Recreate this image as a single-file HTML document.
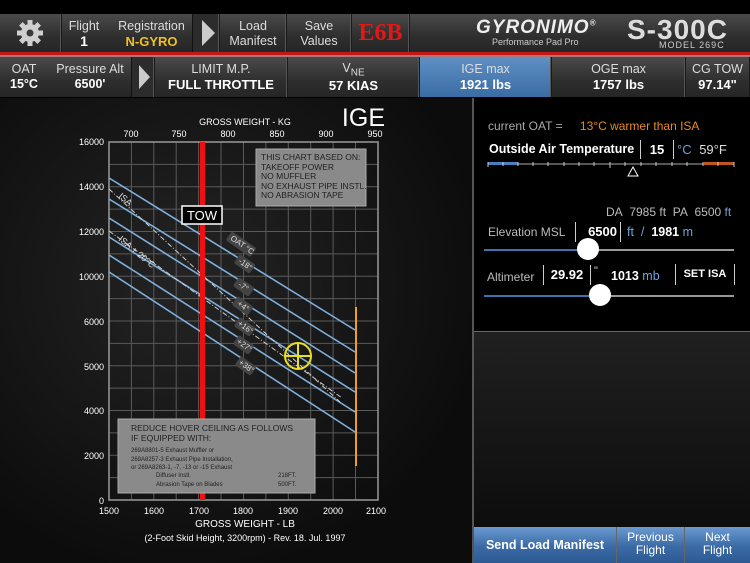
<!DOCTYPE html>
<html><head><meta charset="utf-8"><style>
*{margin:0;padding:0;box-sizing:border-box}
body{width:750px;height:563px;background:#000;overflow:hidden;font-family:"Liberation Sans",sans-serif;position:relative;color:#fff}
.a{position:absolute}
.bar{background:linear-gradient(#4a4a4a,#2e2e2e 60%,#262626)}
.cell{position:absolute;top:0;height:100%;border-right:1px solid #1a1a1a;box-shadow:inset -1px 0 0 #555;text-align:center;color:#ddd;font-size:12.5px;line-height:15px}
.c{text-align:center}
.b{font-weight:bold}
</style></head><body>
<div class="a bar" style="left:0;top:14px;width:750px;height:38px">
 <div class="cell" style="left:0;width:62px"><svg width="62" height="38"><g transform="translate(30,19)" fill="#cfcfcf"><circle r="9"/><g id="t"><rect x="-2.5" y="-13" width="5" height="6"/></g><use href="#t" transform="rotate(45)"/><use href="#t" transform="rotate(90)"/><use href="#t" transform="rotate(135)"/><use href="#t" transform="rotate(180)"/><use href="#t" transform="rotate(225)"/><use href="#t" transform="rotate(270)"/><use href="#t" transform="rotate(315)"/><circle r="3.5" fill="#3a3a3a"/></g></svg></div>
 <div class="cell" style="left:62px;width:130px;box-shadow:none;border:none">
  <div class="a" style="left:4px;top:5px;width:36px">Flight<br><b style="color:#fff;font-size:14px">1</b></div>
  <div class="a" style="left:52px;top:5px;width:75px">Registration<br><b style="color:#f0c020;font-size:13px">N-GYRO</b></div>
 </div>
 <div class="cell" style="left:192px;width:28px;background:#2c2c2c;border-left:1px solid #111"><svg width="28" height="38"><polygon points="9,6 22,19 9,32" fill="#ccc"/></svg></div>
 <div class="cell" style="left:220px;width:67px;padding-top:5px">Load<br>Manifest</div>
 <div class="cell" style="left:287px;width:65px;padding-top:5px">Save<br>Values</div>
 <div class="cell" style="left:352px;width:58px;color:#e01818;font-size:24px;font-weight:bold;line-height:38px;font-family:'Liberation Serif',serif">E6B</div>
 <div class="a" style="left:476px;top:3px;font-size:19px;font-style:italic;font-weight:bold;color:#eee;letter-spacing:1px">GYRONIMO<sup style="font-size:8px">®</sup></div>
 <div class="a" style="left:492px;top:23px;font-size:9px;color:#ccc">Performance Pad Pro</div>
 <div class="a" style="left:627px;top:0px;font-size:28px;color:#ddd;font-weight:bold;letter-spacing:1px">S-300C</div>
 <div class="a" style="left:659px;top:26px;font-size:9px;color:#ccc;letter-spacing:1px">MODEL 269C</div>
</div>
<div class="a" style="left:0;top:52px;width:750px;height:3px;background:#c41818"></div>
<div class="a" style="left:0;top:55px;width:750px;height:2px;background:#a77"></div>
<div class="a bar" style="left:0;top:57px;width:750px;height:40px">
 <div class="a" style="left:0;top:5px;width:130px;color:#ddd;font-size:12.5px;line-height:15px">
  <div class="a c" style="left:8px;width:32px">OAT<br><b style="color:#fff">15°C</b></div>
  <div class="a c" style="left:54px;width:72px">Pressure Alt<br><b style="color:#fff">6500'</b></div>
 </div>
 <div class="cell" style="left:131px;width:24px;background:#2c2c2c;border-left:1px solid #111"><svg width="24" height="40"><polygon points="7,8 18,20 7,32" fill="#ccc"/></svg></div>
 <div class="cell" style="left:155px;width:133px;padding-top:5px">LIMIT M.P.<br><b style="color:#fff;font-size:13px">FULL THROTTLE</b></div>
 <div class="cell" style="left:288px;width:132px;padding-top:4px">V<sub style="font-size:10px">NE</sub><br><b style="color:#fff;font-size:13px;position:relative;top:-3px">57 KIAS</b></div>
 <div class="cell" style="left:420px;width:132px;padding-top:5px;background:linear-gradient(#5f8fc3,#3a6ca5)">IGE max<br><b style="color:#fff;font-size:13px">1921 lbs</b></div>
 <div class="cell" style="left:552px;width:134px;padding-top:5px">OGE max<br><b style="color:#fff;font-size:13px">1757 lbs</b></div>
 <div class="cell" style="left:686px;width:64px;padding-top:5px;box-shadow:none">CG TOW<br><b style="color:#fff;font-size:13px">97.14"</b></div>
</div>
<div class="a" style="left:0;top:98px;width:472px;height:465px;background:radial-gradient(ellipse at 40% 40%,#242424,#0c0c0c 75%)"></div>
<svg class="a" style="left:0;top:0" width="472" height="563" font-family="Liberation Sans">
 <g stroke="#5a5a5a" stroke-width="1">
  <path d="M109 142V500M131.4 142V500M153.8 142V500M176.2 142V500M198.6 142V500M221 142V500M243.5 142V500M265.9 142V500M288.3 142V500M310.7 142V500M333.1 142V500M355.5 142V500M378 142V500"/>
  <path d="M109 142H378M109 164.4H378M109 186.8H378M109 209.1H378M109 231.5H378M109 253.9H378M109 276.3H378M109 298.6H378M109 321H378M109 343.4H378M109 365.8H378M109 388.1H378M109 410.5H378M109 432.9H378M109 455.3H378M109 477.6H378M109 500H378"/>
 </g>
 <rect x="109" y="142" width="269" height="358" fill="none" stroke="#999" stroke-width="1.5"/>
 <g stroke="#7fb0dd" stroke-width="1.6">
  <line x1="109" y1="178" x2="355" y2="330"/><line x1="109" y1="199" x2="355" y2="352"/><line x1="109" y1="218" x2="355" y2="373"/><line x1="109" y1="237" x2="355" y2="392"/><line x1="109" y1="255" x2="355" y2="412"/><line x1="109" y1="272" x2="355" y2="432"/>
 </g>
 <g stroke="#ccc" stroke-width="1" stroke-dasharray="5,2,1,2">
  <line x1="109" y1="189" x2="340" y2="402"/><line x1="109" y1="231" x2="342" y2="398"/>
 </g>
 <text x="118" y="197" fill="#ddd" font-size="9" transform="rotate(40 118 197)">ISA</text>
 <text x="118" y="240" fill="#ddd" font-size="9" transform="rotate(40 118 240)">ISA + 20°C</text>
 <rect x="200" y="142" width="5" height="358" fill="#f01010"/>
 <line x1="356" y1="307" x2="356" y2="466" stroke="#f0a020" stroke-width="2"/>
 <g stroke="#e8e020" stroke-width="2" fill="none"><circle cx="298" cy="356" r="13"/><line x1="285" y1="356" x2="311" y2="356"/><line x1="298" y1="343" x2="298" y2="369"/></g>
 <rect x="182" y="206" width="40" height="18" fill="#000" stroke="#fff" stroke-width="1.5"/>
 <text x="202" y="220" fill="#fff" font-size="13" text-anchor="middle">TOW</text>
 <g font-size="8" fill="#ddd">
  <g transform="translate(240,244) rotate(35)"><rect x="-14" y="-6" width="30" height="11" rx="2" fill="#444"/><text x="-11" y="2">OAT °C</text></g>
  <g transform="translate(244,264) rotate(35)"><rect x="-9" y="-6" width="19" height="11" rx="2" fill="#444"/><text x="-6" y="2">-18°</text></g>
  <g transform="translate(243,287) rotate(35)"><rect x="-9" y="-6" width="19" height="11" rx="2" fill="#444"/><text x="-5" y="2">-7°</text></g>
  <g transform="translate(242,306) rotate(35)"><rect x="-9" y="-6" width="19" height="11" rx="2" fill="#444"/><text x="-5" y="2">+4°</text></g>
  <g transform="translate(244,327) rotate(35)"><rect x="-9" y="-6" width="19" height="11" rx="2" fill="#444"/><text x="-7" y="2">+16°</text></g>
  <g transform="translate(243,345) rotate(35)"><rect x="-9" y="-6" width="19" height="11" rx="2" fill="#444"/><text x="-7" y="2">+27°</text></g>
  <g transform="translate(245,366) rotate(35)"><rect x="-9" y="-6" width="19" height="11" rx="2" fill="#444"/><text x="-7" y="2">+38°</text></g>
 </g>
 <rect x="256" y="149" width="110" height="57" fill="#8a8a8a" stroke="#aaa"/>
 <g font-size="8.5" fill="#222"><text x="261" y="160">THIS CHART BASED ON:</text><text x="261" y="170">TAKEOFF POWER</text><text x="261" y="179">NO MUFFLER</text><text x="261" y="189">NO EXHAUST PIPE INSTL.</text><text x="261" y="198">NO ABRASION TAPE</text></g>
 <rect x="118" y="419" width="197" height="74" fill="#8a8a8a" stroke="#aaa"/>
 <g fill="#222"><text x="131" y="431" font-size="8.5">REDUCE HOVER CEILING AS FOLLOWS</text><text x="131" y="441" font-size="8.5">IF EQUIPPED WITH:</text>
 <g font-size="6"><text x="131" y="452">269A8801-5 Exhaust Muffler or</text><text x="131" y="461">269A8257-3 Exhaust Pipe Installation,</text><text x="131" y="469">or 269A8263-1, -7, -13 or -15 Exhaust</text><text x="156" y="477">Diffuser Instl.</text><text x="278" y="477">218FT.</text><text x="156" y="486">Abrasion Tape on Blades</text><text x="278" y="486">500FT.</text></g></g>
 <text x="385" y="126" fill="#fff" font-size="25" text-anchor="end">IGE</text>
 <g fill="#fff" font-size="9" text-anchor="middle">
  <text x="245" y="125">GROSS WEIGHT - KG</text>
  <text x="131" y="137">700</text><text x="179" y="137">750</text><text x="228" y="137">800</text><text x="277" y="137">850</text><text x="326" y="137">900</text><text x="375" y="137">950</text>
  <text x="109" y="514">1500</text><text x="154" y="514">1600</text><text x="199" y="514">1700</text><text x="243" y="514">1800</text><text x="288" y="514">1900</text><text x="333" y="514">2000</text><text x="376" y="514">2100</text>
  <text x="245" y="527" font-size="10">GROSS WEIGHT - LB</text>
  <text x="245" y="541">(2-Foot Skid Height, 3200rpm) - Rev. 18. Jul. 1997</text>
 </g>
 <g fill="#fff" font-size="9" text-anchor="end">
  <text x="104" y="145">16000</text><text x="104" y="190">14000</text><text x="104" y="235">12000</text><text x="104" y="280">10000</text><text x="104" y="325">6000</text><text x="104" y="370">5000</text><text x="104" y="414">4000</text><text x="104" y="459">2000</text><text x="104" y="504">0</text>
 </g>
</svg>
<div class="a" style="left:472px;top:98px;width:278px;height:465px;background:#000;border-left:2px solid #555"></div>
<div class="a" style="left:474px;top:331px;width:276px;height:196px;background:linear-gradient(#202020,#0d0d0d);border-top:1px solid #666"></div>
<div class="a" style="left:488px;top:119px;font-size:12px;color:#aaa">current OAT = <span style="color:#e88a20;margin-left:14px">13°C warmer than ISA</span></div>
<div class="a" style="left:489px;top:142px;font-size:12.5px;font-weight:bold;color:#fff">Outside Air Temperature</div>
<div class="a" style="left:640px;top:140px;width:34px;height:19px;border-left:1px solid #ccc;border-right:1px solid #ccc;font-size:13px;text-align:center;line-height:19px;font-weight:bold">15</div>
<div class="a" style="left:677px;top:142px;font-size:13px;color:#6fa0df">°C <span style="color:#ddd;margin-left:4px">59°F</span></div>
<svg class="a" style="left:486px;top:160px" width="250" height="20">
 <line x1="2" y1="4" x2="248" y2="4" stroke="#aaa"/>
 <rect x="2" y="2" width="30" height="3" fill="#4a7fbf"/><rect x="218" y="2" width="30" height="3" fill="#c05520"/>
 <path d="M2 2v5M17 2v4M32 2v4M47 2v4M62 2v4M78 2v4M93 2v4M108 2v4M124 2v6M139 2v4M155 2v4M170 2v4M186 2v4M201 2v4M217 2v4M232 2v4M248 2v5" stroke="#ccc"/>
 <polygon points="147,7 142,16 152,16" fill="none" stroke="#fff"/>
</svg>
<div class="a" style="left:606px;top:205px;font-size:12px;color:#bbb">DA&nbsp; 7985 ft&nbsp; PA&nbsp; 6500 <span style="color:#6fa0df">ft</span></div>
<div class="a" style="left:488px;top:225px;font-size:12px;color:#bbb">Elevation MSL</div>
<div class="a" style="left:575px;top:222px;width:46px;height:20px;border-left:1px solid #ccc;border-right:1px solid #ccc;font-size:13px;font-weight:bold;text-align:right;line-height:20px;padding-right:3px">6500</div>
<div class="a" style="left:627px;top:225px;font-size:12.5px;color:#6fa0df">ft &nbsp;/&nbsp; <b style="color:#fff">1981</b> m</div>
<div class="a" style="left:484px;top:249px;width:104px;height:2px;background:#3f70b0"></div>
<div class="a" style="left:588px;top:249px;width:146px;height:2px;background:#999"></div>
<div class="a" style="left:577px;top:238px;width:22px;height:22px;border-radius:50%;background:#fff"></div>
<div class="a" style="left:487px;top:270px;font-size:12px;color:#bbb">Altimeter</div>
<div class="a" style="left:543px;top:265px;width:48px;height:20px;border-left:1px solid #ccc;border-right:1px solid #ccc;font-size:13px;font-weight:bold;text-align:center;line-height:20px">29.92</div>
<div class="a" style="left:594px;top:265px;font-size:11px;color:#ddd">"</div>
<div class="a" style="left:611px;top:269px;font-size:12.5px;color:#fff"><b>1013</b> <span style="color:#6fa0df">mb</span></div>
<div class="a" style="left:675px;top:264px;width:60px;height:21px;border-left:1px solid #ccc;border-right:1px solid #ccc;font-size:11px;font-weight:bold;text-align:center;line-height:21px">SET ISA</div>
<div class="a" style="left:484px;top:295px;width:115px;height:2px;background:#3f70b0"></div>
<div class="a" style="left:599px;top:295px;width:135px;height:2px;background:#999"></div>
<div class="a" style="left:589px;top:284px;width:22px;height:22px;border-radius:50%;background:#fff"></div>
<div class="a" style="left:474px;top:527px;width:276px;height:36px;background:linear-gradient(#6a9ad0,#3a6aa5 55%,#2d5a92)"></div>
<div class="a b c" style="left:474px;top:538px;width:142px;font-size:12.5px">Send Load Manifest</div>
<div class="a c" style="left:616px;top:527px;width:69px;height:36px;border-left:1px solid #666;border-right:1px solid #666;font-size:12px;line-height:13px;padding-top:4px">Previous<br>Flight</div>
<div class="a c" style="left:685px;top:531px;width:65px;font-size:12px;line-height:13px">Next<br>Flight</div>
</body></html>
